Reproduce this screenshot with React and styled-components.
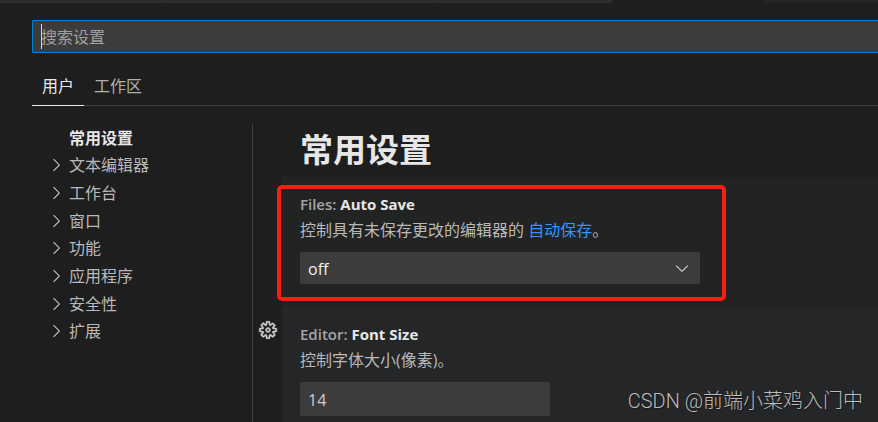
import React, { useState } from "react";
import styled, { createGlobalStyle } from "styled-components";
import { VscChevronDown, VscChevronRight, VscGear } from "react-icons/vsc";

const tocItems = [
    { name: '常用设置', leaf: true },
    { name: '文本编辑器' },
    { name: '工作台' },
    { name: '窗口' },
    { name: '功能' },
    { name: '应用程序' },
    { name: '安全性' },
    { name: '扩展' }
];

const App = () => {
    const [search, setSearch] = useState('');
    const [scope, setScope] = useState('user');
    const [section, setSection] = useState('常用设置');
    const [autoSave, setAutoSave] = useState('off');
    const [fontSize, setFontSize] = useState('14');

    return (
        <Page>
            <GlobalStyle />
            <EditorTabs>
                <EditorTab $grow={167} />
                <EditorTab $grow={267} />
                <EditorTab $grow={179} />
                <EditorTab $grow={149} $active />
                <EditorTab $grow={116} $dim />
            </EditorTabs>

            <Header>
                <SearchBox>
                    <SearchInput
                        type="text"
                        aria-label="搜索设置"
                        placeholder="搜索设置"
                        value={search}
                        onChange={event => setSearch(event.target.value)}
                    />
                    {!search && <Caret />}
                </SearchBox>
                <ScopeTabs>
                    <ScopeTab type="button" $active={scope === 'user'} onClick={() => setScope('user')}>用户</ScopeTab>
                    <ScopeTab type="button" $active={scope === 'workspace'} onClick={() => setScope('workspace')}>工作区</ScopeTab>
                </ScopeTabs>
            </Header>

            <Body>
                <Toc>
                    <TocList>
                        {tocItems.map(item => (
                            <TocRow key={item.name}>
                                <TocButton type="button" $active={section === item.name} onClick={() => setSection(item.name)}>
                                    <Twistie>{!item.leaf && <VscChevronRight />}</Twistie>
                                    {item.name}
                                </TocButton>
                            </TocRow>
                        ))}
                    </TocList>
                </Toc>

                <Settings>
                    <GroupTitle>常用设置</GroupTitle>

                    <SettingRow>
                        <Gutter />
                        <Setting $background="#222423">
                            <Highlight />
                            <SettingLabel htmlFor="autoSave"><Category>Files: </Category>Auto Save</SettingLabel>
                            <Description>
                                控制具有未保存更改的编辑器的 <Link href="#autosave">自动保存</Link>。
                            </Description>
                            <SelectBox>
                                <Select id="autoSave" value={autoSave} onChange={event => setAutoSave(event.target.value)}>
                                    <option>off</option>
                                    <option>afterDelay</option>
                                    <option>onFocusChange</option>
                                    <option>onWindowChange</option>
                                </Select>
                                <VscChevronDown />
                            </SelectBox>
                        </Setting>
                    </SettingRow>

                    <SettingRow $last>
                        <Gutter>
                            <GearButton type="button" aria-label="更多操作"><VscGear /></GearButton>
                        </Gutter>
                        <Setting $background="#252628">
                            <SettingLabel htmlFor="fontSize"><Category>Editor: </Category>Font Size</SettingLabel>
                            <Description>控制字体大小(像素)。</Description>
                            <NumberInput
                                id="fontSize"
                                type="text"
                                inputMode="numeric"
                                value={fontSize}
                                onChange={event => setFontSize(event.target.value)}
                            />
                        </Setting>
                    </SettingRow>
                </Settings>
            </Body>
            <Watermark>CSDN @前端小菜鸡入门中</Watermark>
        </Page>
    )
}

export default App;

const GlobalStyle = createGlobalStyle`
    * {
        box-sizing: border-box;
    }

    body {
        margin: 0;
        background: #1e1e1e;
    }

    body, button, input, select {
        font-family: "Open Sans", "Noto Sans CJK SC", sans-serif;
        font-size: 16px;
        line-height: 24px;
    }
`;

const Page = styled.div`
    position: relative;
    display: flex;
    flex-direction: column;
    height: 100vh;
    overflow: hidden;
    background: #1e1e1e;
    color: #cccccc;
`;

const EditorTabs = styled.div`
    display: flex;
    flex: none;
    height: 3px;
`;

const EditorTab = styled.div`
    flex: ${props => props.$grow} 1 0;
    background: ${props => props.$active ? '#1e1e1e' : props.$dim ? '#252526' : '#2d2d2d'};
    border-right: 1px solid ${props => props.$active || props.$dim ? 'transparent' : '#252526'};
`;

const Header = styled.header`
    flex: none;
    padding: 17px 0 0 32px;
`;

const SearchBox = styled.div`
    position: relative;
    display: flex;
    height: 33px;
    border: 1px solid #007fd4;
    border-right: 0;
    border-radius: 2px 0 0 2px;
    background: #3c3c3c;
`;

const SearchInput = styled.input`
    flex: 1;
    min-width: 0;
    padding: 0 8px;
    border: 0;
    outline: 0;
    background: transparent;
    color: #cccccc;

    &::placeholder {
        color: #a0a0a0;
        opacity: 1;
    }
`;

const Caret = styled.span`
    position: absolute;
    top: 3px;
    left: 8px;
    width: 1px;
    height: 25px;
    background: #d4d4d4;
`;

const ScopeTabs = styled.div`
    display: flex;
    margin-top: 17px;
    border-bottom: 1px solid #414141;
`;

const ScopeTab = styled.button`
    margin-bottom: -1px;
    padding: 4px 10px 7px;
    border: 0;
    border-bottom: 1px solid ${props => props.$active ? '#e7e7e7' : 'transparent'};
    background: transparent;
    color: ${props => props.$active ? '#e7e7e7' : '#b0b0b0'};
    cursor: pointer;
`;

const Body = styled.div`
    display: flex;
    flex: 1;
    min-height: 0;
    margin-top: 18px;
    padding-left: 32px;
`;

const Toc = styled.nav`
    flex: none;
    width: 221px;
    padding-left: 14px;
    border-right: 1px solid #414141;
`;

const TocList = styled.ul`
    display: grid;
    grid-auto-rows: 1fr;
    height: 221px;
    margin: 0;
    padding: 0;
    list-style: none;
`;

const TocRow = styled.li`
    display: flex;
    align-items: center;
`;

const TocButton = styled.button`
    display: flex;
    align-items: center;
    gap: 3px;
    padding: 0;
    border: 0;
    background: transparent;
    color: ${props => props.$active ? '#e7e7e7' : '#b9b9b9'};
    font-weight: ${props => props.$active ? 700 : 400};
    cursor: pointer;
`;

const Twistie = styled.span`
    display: flex;
    width: 20px;
    color: #c5c5c5;
    font-size: 20px;
`;

const Settings = styled.main`
    display: flex;
    flex: 1;
    flex-direction: column;
    min-width: 0;
`;

const GroupTitle = styled.h2`
    flex: none;
    height: 53px;
    margin: 0;
    padding-left: 47px;
    color: #e7e7e7;
    font-size: 33px;
    font-weight: 700;
    line-height: 52px;
`;

const SettingRow = styled.section`
    display: flex;
    flex: ${props => props.$last ? '1 0 auto' : 'none'};
`;

const Gutter = styled.div`
    flex: none;
    width: 29px;
    padding: 13px 0 0 5px;
`;

const GearButton = styled.button`
    display: flex;
    padding: 0;
    border: 0;
    background: transparent;
    color: #d0d0d0;
    font-size: 20px;
    cursor: pointer;

    svg {
        stroke: currentColor;
        stroke-width: 0.4;
    }
`;

const Setting = styled.div`
    position: relative;
    flex: 1;
    min-width: 0;
    padding: 14px 18px 23px;
    background: ${props => props.$background};
`;

/* red frame drawn over the setting */
const Highlight = styled.div`
    position: absolute;
    top: 8px;
    left: -5px;
    width: 449px;
    height: 116px;
    border: 4px solid #fc1d10;
    border-radius: 5px;
    pointer-events: none;
`;

const SettingLabel = styled.label`
    display: block;
    color: #e7e7e7;
    font-size: 15px;
    font-weight: 700;
    line-height: 26px;
`;

const Category = styled.span`
    color: #a5a5a5;
    font-weight: 600;
`;

const Description = styled.p`
    margin: 0 0 9px;
    color: #b9b9b9;
    line-height: 26px;
`;

const Link = styled.a`
    color: #3794ff;
    text-decoration: none;
`;

const SelectBox = styled.div`
    position: relative;
    display: flex;
    max-width: 400px;

    svg {
        position: absolute;
        top: 6px;
        right: 8px;
        font-size: 20px;
        pointer-events: none;
    }
`;

const Select = styled.select`
    flex: 1;
    height: 32px;
    padding: 2px 8px 0;
    appearance: none;
    border: 0;
    border-radius: 2px;
    background: #3c3c3c;
    color: #f0f0f0;
`;

const NumberInput = styled.input`
    display: block;
    width: 250px;
    height: 34px;
    padding: 2px 8px 0;
    border: 0;
    border-radius: 2px;
    outline: 0;
    background: #3c3c3c;
    color: #cccccc;
`;

const Watermark = styled.div`
    position: absolute;
    right: 15px;
    bottom: 8px;
    color: #bcbcbd;
    font-family: Roboto, "Noto Sans CJK SC", sans-serif;
    font-size: 20px;
    font-weight: 300;
    line-height: 26px;
    text-shadow: 1px 1px 1px rgba(0, 0, 0, 0.4);
    pointer-events: none;
`;
